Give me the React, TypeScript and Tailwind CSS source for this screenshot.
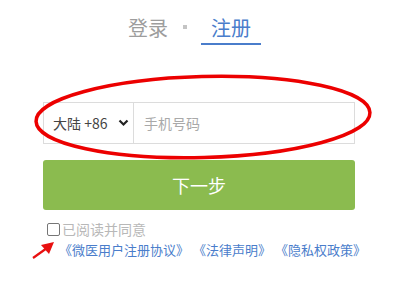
import React from 'react';

const font = '"Noto Sans CJK SC", "Liberation Sans", sans-serif';

const App = () => {
  const links = ['《微医用户注册协议》', '《法律声明》', '《隐私权政策》'];

  return (
    <div className="relative w-[406px] h-[294px] bg-white overflow-hidden" style={{ fontFamily: font }}>
      {/* tabs */}
      <div className="flex items-start pl-[128px] pt-[18px] h-[45px]">
        <span className="text-[20px] leading-[20px] text-[#9d9d9d]">登录</span>
        <span className="mt-[7px] ml-[15px] w-[4px] h-[4px] bg-[#c4c4c4]" />
        <div className="ml-[14px] px-[10px] h-[27px] border-b-2 border-[#4a7dcb]">
          <span className="block text-[20px] leading-[20px] text-[#4a7dcb]">注册</span>
        </div>
      </div>

      {/* phone input */}
      <div className="ml-[43px] w-[312px] mt-[57px] h-[42px] flex border border-[#dcdcdc]">
        <div className="w-[90px] flex items-center pl-[9px] pr-[4px] border-r border-[#dcdcdc]">
          <span className="text-[14px] leading-[16px] text-[#444]">大陆 +86</span>
          <svg className="ml-auto" width="11" height="8" viewBox="0 0 11 8">
            <polyline points="1.5,1.5 5.5,5.5 9.5,1.5" fill="none" stroke="#222" strokeWidth="2.2" />
          </svg>
        </div>
        <div className="flex items-center pl-[10px] text-[14px] leading-[16px] text-[#a9a9a9]">手机号码</div>
      </div>

      {/* next button */}
      <button className="ml-[43px] w-[312px] mt-[16px] h-[50px] rounded-[3px] bg-[#8bbb4f] text-white text-[18px] leading-[20px] flex items-center justify-center">
        下一步
      </button>

      {/* agreement */}
      <div className="ml-[47px] mt-[12px] h-[14px] flex items-center">
        <span className="w-[13px] h-[13px] rounded-[2px] border border-[#767676] bg-white" />
        <span className="ml-[2px] text-[14px] leading-[14px] text-[#b8b8b8]">已阅读并同意</span>
      </div>
      <div className="ml-[59px] mt-[6px] flex gap-[4px] text-[13px] leading-[16px] text-[#4a7dcb]">
        {links.map((l) => (
          <span key={l}>{l}</span>
        ))}
      </div>

      {/* annotations */}
      <svg className="absolute inset-0 pointer-events-none" width="406" height="294" viewBox="0 0 406 294">
        <ellipse cx="203" cy="117" rx="167" ry="40.5" fill="none" stroke="#ec0000" strokeWidth="3.5" transform="rotate(-1.5 203 117)" />
        <line x1="33" y1="258" x2="47" y2="248" stroke="#e81010" strokeWidth="2.2" />
        <polygon points="54,242 41,245 49,254" fill="#e81010" />
      </svg>
    </div>
  );
};

export default App;
